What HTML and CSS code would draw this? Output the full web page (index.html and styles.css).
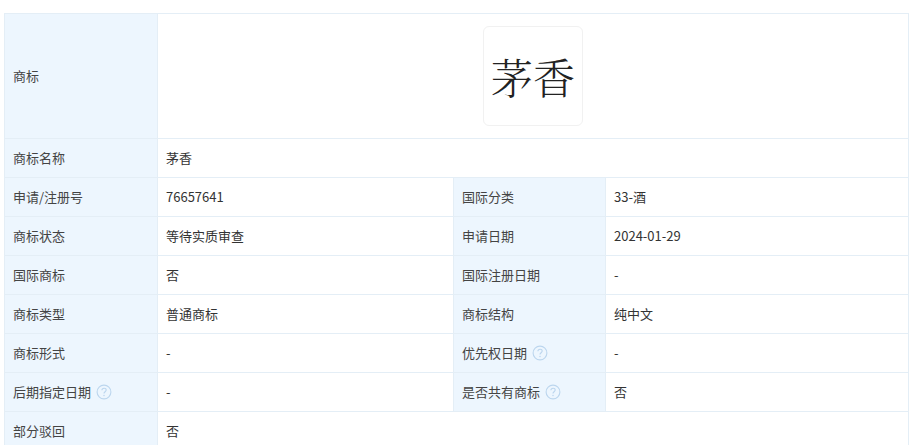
FILE: index.html
```html
<!DOCTYPE html>
<html lang="zh-CN">
<head>
<meta charset="utf-8">
<title>商标信息</title>
<link rel="stylesheet" href="styles.css">
</head>
<body>
<svg class="defs" width="0" height="0" aria-hidden="true"><defs>
<g id="q"><circle cx="8" cy="8" r="6.9" fill="none" stroke="currentColor" stroke-width="1.1"/><path d="M5.9 6.3c0-1.3 1-2.1 2.2-2.1s2.1.8 2.1 1.9c0 1.7-2.2 1.7-2.2 3.5" fill="none" stroke="currentColor" stroke-width="1.1"/><circle cx="8" cy="11.4" r=".75" fill="currentColor"/></g>
</defs></svg>
<table class="info">
<colgroup><col class="c1"><col class="c2"><col class="c3"><col class="c4"></colgroup>
<tbody>
<tr class="logo-row"><th>商标</th><td colspan="3"><div class="logo"><span>茅香</span></div></td></tr>
<tr><th>商标名称</th><td colspan="3">茅香</td></tr>
<tr><th>申请/注册号</th><td>76657641</td><th>国际分类</th><td>33-酒</td></tr>
<tr><th>商标状态</th><td>等待实质审查</td><th>申请日期</th><td>2024-01-29</td></tr>
<tr><th>国际商标</th><td>否</td><th>国际注册日期</th><td>-</td></tr>
<tr><th>商标类型</th><td>普通商标</td><th>商标结构</th><td>纯中文</td></tr>
<tr><th>商标形式</th><td>-</td><th>优先权日期<svg class="help" viewBox="0 0 16 16"><use href="#q"/></svg></th><td>-</td></tr>
<tr><th>后期指定日期<svg class="help" viewBox="0 0 16 16"><use href="#q"/></svg></th><td>-</td><th>是否共有商标<svg class="help" viewBox="0 0 16 16"><use href="#q"/></svg></th><td>否</td></tr>
<tr><th>部分驳回</th><td colspan="3">否</td></tr>
</tbody>
</table>
</body>
</html>
```
FILE: styles.css
```css
html, body {
  margin: 0;
  height: 445px;
  overflow: hidden;
  background: #fff;
}
body {
  padding: 13px 1px 0 4px;
  box-sizing: border-box;
  font-family: "Microsoft YaHei", "Noto Sans CJK SC", "Liberation Sans", sans-serif;
  font-size: 13px;
  color: #333;
}
.defs { display: block; height: 0; }
.info {
  width: 904px;
  table-layout: fixed;
  border-collapse: collapse;
}
.c1 { width: 153px; }
.c2 { width: 296px; }
.c3 { width: 152px; }
.c4 { width: 303px; }
tr { height: 39px; }
.logo-row { height: 125px; }
th, td {
  border: 1px solid #e4eef6;
  padding: 0 8px;
  font-weight: 400;
  text-align: left;
  line-height: 20px;
  vertical-align: middle;
}
th { background: #edf6fe; color: #444; }
.logo {
  width: 98px;
  height: 98px;
  margin: 0 auto;
  border: 1px solid #f1f1f1;
  border-radius: 6px;
  display: flex;
  align-items: center;
  justify-content: center;
}
.logo span {
  font-family: "Noto Serif CJK SC", "Noto Sans CJK SC", serif;
  font-size: 42px;
  font-weight: 300;
  line-height: 1;
  color: #222;
}
.help {
  width: 16px;
  height: 16px;
  margin-left: 5px;
  vertical-align: -3px;
  color: #bcd6ee;
}
```
